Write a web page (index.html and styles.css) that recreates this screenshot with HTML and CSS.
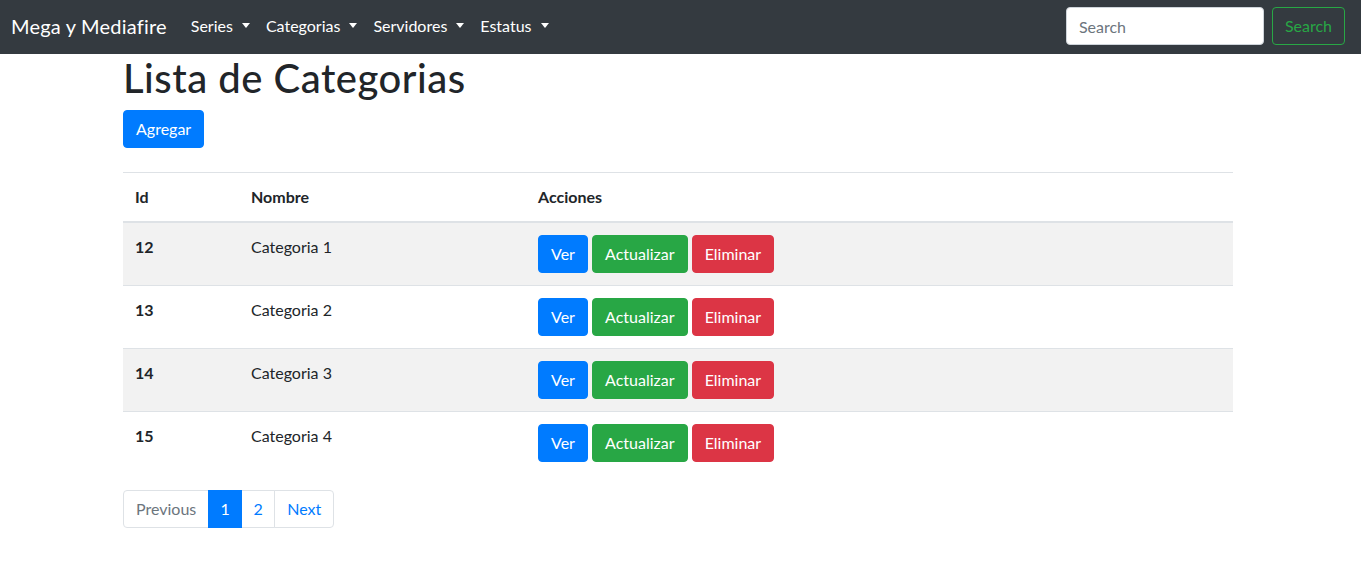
FILE: index.html
```html
<!DOCTYPE html>
<html lang="es">
<head>
<meta charset="utf-8">
<title>Lista de Categorias</title>
<link rel="stylesheet" href="styles.css">
</head>
<body>
<nav class="navbar">
  <a class="brand" href="#">Mega y Mediafire</a>
  <ul class="nav">
    <li><a class="nav-link dropdown-toggle" href="#">Series</a></li>
    <li><a class="nav-link dropdown-toggle" href="#">Categorias</a></li>
    <li><a class="nav-link dropdown-toggle" href="#">Servidores</a></li>
    <li><a class="nav-link dropdown-toggle" href="#">Estatus</a></li>
  </ul>
  <form class="search-form">
    <input class="form-control" type="search" placeholder="Search">
    <button class="btn btn-outline-success" type="button">Search</button>
  </form>
</nav>
<main class="container">
  <h1 class="title">Lista de Categorias</h1>
  <a class="btn btn-primary" href="#">Agregar</a>
  <table class="table">
    <thead>
      <tr><th class="col-id">Id</th><th class="col-name">Nombre</th><th>Acciones</th></tr>
    </thead>
    <tbody>
      <tr class="striped"><th>12</th><td>Categoria 1</td><td><a class="btn btn-primary" href="#">Ver</a> <a class="btn btn-success" href="#">Actualizar</a> <a class="btn btn-danger" href="#">Eliminar</a></td></tr>
      <tr><th>13</th><td>Categoria 2</td><td><a class="btn btn-primary" href="#">Ver</a> <a class="btn btn-success" href="#">Actualizar</a> <a class="btn btn-danger" href="#">Eliminar</a></td></tr>
      <tr class="striped"><th>14</th><td>Categoria 3</td><td><a class="btn btn-primary" href="#">Ver</a> <a class="btn btn-success" href="#">Actualizar</a> <a class="btn btn-danger" href="#">Eliminar</a></td></tr>
      <tr><th>15</th><td>Categoria 4</td><td><a class="btn btn-primary" href="#">Ver</a> <a class="btn btn-success" href="#">Actualizar</a> <a class="btn btn-danger" href="#">Eliminar</a></td></tr>
    </tbody>
  </table>
  <ul class="pagination">
    <li class="page-item disabled"><span class="page-link">Previous</span></li>
    <li class="page-item active"><span class="page-link page-num">1</span></li>
    <li class="page-item"><a class="page-link page-num" href="#">2</a></li>
    <li class="page-item"><a class="page-link" href="#">Next</a></li>
  </ul>
</main>
</body>
</html>
```
FILE: styles.css
```css
* { box-sizing: border-box; }
body {
  margin: 0;
  font-family: Lato, "Noto Sans", "Liberation Sans", sans-serif;
  font-size: 16px;
  line-height: 1.5;
  color: #212529;
  background: #fff;
}
a { text-decoration: none; }

.navbar {
  display: flex;
  align-items: center;
  background: #343a40;
  padding: 7px 16px 9px 11px;
  height: 54px;
}
.brand {
  color: #fff;
  font-size: 20px;
  line-height: 30px;
  margin-right: 16px;
  white-space: nowrap;
  letter-spacing: 0.2px;
}
.nav {
  display: flex;
  list-style: none;
  margin: 0;
  padding: 0;
  flex: 1;
}
.nav-link {
  display: block;
  color: #fff;
  padding: 8px;
  line-height: 22px;
}
.dropdown-toggle::after {
  content: "";
  display: inline-block;
  margin-left: 9px;
  vertical-align: 4px;
  border-top: 5px solid;
  border-right: 4.5px solid transparent;
  border-left: 4.5px solid transparent;
  border-bottom: 0;
}
.search-form {
  display: flex;
  align-items: center;
}
.form-control {
  width: 198px;
  height: 38px;
  padding: 6px 12px;
  font: inherit;
  color: #495057;
  background: #fff;
  border: 1px solid #ced4da;
  border-radius: 4px;
  margin-right: 8px;
}
.form-control::placeholder { color: #6c757d; }

.btn {
  display: inline-block;
  font: inherit;
  font-size: 16px;
  line-height: 24px;
  padding: 6px 12px;
  border: 1px solid transparent;
  border-radius: 4px;
  color: #fff;
  vertical-align: middle;
  background: transparent;
}
.btn-primary { background: #007bff; border-color: #007bff; }
.btn-success { background: #28a745; border-color: #28a745; }
.btn-danger { background: #dc3545; border-color: #dc3545; }
.btn-outline-success { color: #28a745; border-color: #28a745; }

.container {
  width: 1110px;
  margin-left: calc(50% - 557.5px);
}
.title {
  font-size: 40px;
  font-weight: 500;
  line-height: 48px;
  margin: 0 0 8px;
  letter-spacing: 0.5px;
}

.table {
  width: 100%;
  border-collapse: collapse;
  margin-top: 24px;
  margin-bottom: 16px;
}
.table th, .table td {
  padding: 12px;
  text-align: left;
  vertical-align: top;
  border-top: 1px solid #dee2e6;
}
.table th { font-weight: 700; }
.table thead th {
  vertical-align: bottom;
  border-bottom: 2px solid #dee2e6;
}
.col-id { width: 116px; }
.col-name { width: 287px; }
.striped { background: #f2f2f2; }

.pagination {
  display: flex;
  list-style: none;
  margin: 0;
  padding: 0;
}
.page-link {
  display: block;
  padding: 8px 12px;
  line-height: 20px;
  color: #007bff;
  background: #fff;
  border: 1px solid #dee2e6;
  margin-left: -1px;
}
.page-num {
  width: 34px;
  text-align: center;
  padding-left: 0;
  padding-right: 0;
}
.page-item:first-child .page-link {
  margin-left: 0;
  border-radius: 4px 0 0 4px;
}
.page-item:last-child .page-link { border-radius: 0 4px 4px 0; }
.page-item.disabled .page-link { color: #6c757d; }
.page-item.active .page-link {
  color: #fff;
  background: #007bff;
  border-color: #007bff;
  position: relative;
}
```
